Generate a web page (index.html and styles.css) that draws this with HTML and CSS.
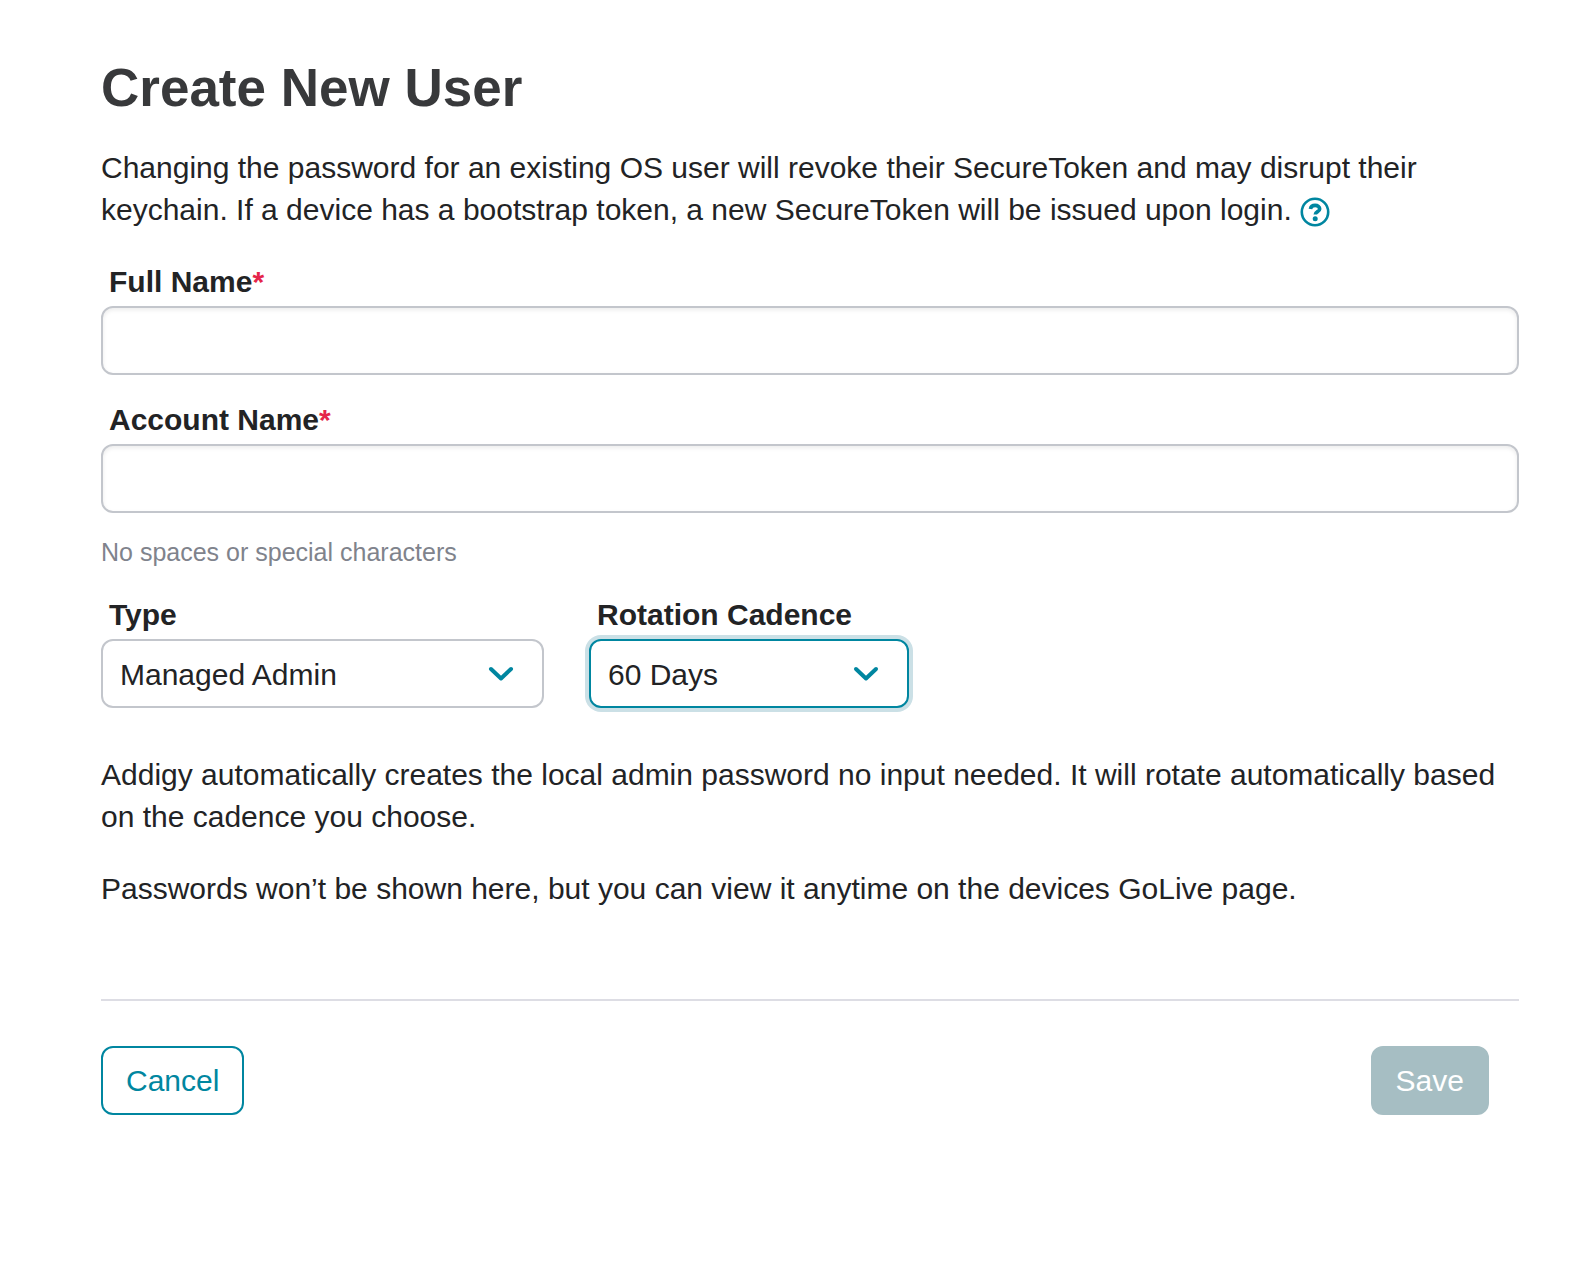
FILE: index.html
```
<!DOCTYPE html>
<html lang="en">
<head>
  <meta charset="UTF-8">
  <meta name="viewport" content="width=device-width, initial-scale=1">
  <title>Create New User</title>
  <link rel="stylesheet" href="styles.css">
</head>
<body>
  <form class="user-form">
    <h1>Create New User</h1>
    <p class="intro">
      Changing the password for an existing OS user will revoke their SecureToken and may disrupt their keychain. If a device has a bootstrap token, a new SecureToken will be issued upon login.
      <button type="button" class="help" aria-label="Help">
        <svg viewBox="0 0 30 30" fill="none" stroke="currentColor">
          <circle cx="15" cy="15" r="13.2" stroke-width="2.6"/>
          <path d="M10.4 12C10.9 9.5 12.6 8.4 15.1 8.4C17.8 8.4 19.7 9.8 19.7 12C19.7 14.7 15.3 14.6 15.3 17.6" stroke-width="3.6"/>
          <circle cx="15.2" cy="21.8" r="2.5" fill="currentColor" stroke="none"/>
        </svg>
      </button>
    </p>

    <div class="field">
      <label for="fullName">Full Name<span class="required">*</span></label>
      <input type="text" id="fullName" name="fullName" required>
    </div>

    <div class="field">
      <label for="accountName">Account Name<span class="required">*</span></label>
      <input type="text" id="accountName" name="accountName" aria-describedby="accountHint" required>
      <p class="hint" id="accountHint">No spaces or special characters</p>
    </div>

    <div class="row">
      <div class="field type">
        <label for="type">Type</label>
        <div class="select">
          <select id="type" name="type">
            <option>Managed Admin</option>
          </select>
          <svg class="chevron" viewBox="0 0 26 16"><path d="M3 3L13 12.5L23 3"/></svg>
        </div>
      </div>
      <div class="field cadence">
        <label for="cadence">Rotation Cadence</label>
        <div class="select">
          <select id="cadence" name="cadence" class="active">
            <option>60 Days</option>
          </select>
          <svg class="chevron" viewBox="0 0 26 16"><path d="M3 3L13 12.5L23 3"/></svg>
        </div>
      </div>
    </div>

    <div class="notes">
      <p>Addigy automatically creates the local admin password no input needed. It will rotate automatically based on the cadence you choose.</p>
      <p>Passwords won’t be shown here, but you can view it anytime on the devices GoLive page.</p>
    </div>

    <div class="actions">
      <button type="button" class="btn cancel">Cancel</button>
      <button type="submit" class="btn save" disabled>Save</button>
    </div>
  </form>
</body>
</html>
```
FILE: styles.css
```
* {
  box-sizing: border-box;
}
body {
  margin: 0;
  background: #fff;
  color: #222325;
  font-family: "Helvetica Neue", "Liberation Sans", Arial, sans-serif;
  font-size: 30px;
  line-height: 42px;
}
.user-form {
  padding: 57px 59px 60px 101px;
}
h1 {
  margin: 0 0 28px;
  color: #38393b;
  font-size: 53px;
  line-height: 62px;
}
p {
  margin: 0;
}
.intro {
  margin-bottom: 30px;
}
.help {
  display: inline-block;
  padding: 0;
  border: none;
  background: none;
  color: #0086a0;
  cursor: pointer;
  vertical-align: -7px;
}
.help svg {
  display: block;
  width: 30px;
  height: 30px;
}
.field {
  display: flex;
  flex-direction: column;
  gap: 3px;
  margin-bottom: 24px;
}
label {
  padding-left: 8px;
  font-weight: bold;
}
.required {
  color: #e5254b;
}
input, select {
  display: block;
  width: 100%;
  height: 69px;
  padding: 0 17px;
  border: 2px solid #c3c6cc;
  border-radius: 12px;
  background: #fff;
  color: inherit;
  font: inherit;
}
input {
  box-shadow: inset 0 2px 4px rgba(0, 0, 0, 0.08);
}
.hint {
  margin-top: 18px;
  color: #7f838c;
  font-size: 25px;
  line-height: 36px;
}
.row {
  display: flex;
  gap: 45px;
  margin-bottom: 22px;
}
.type {
  width: 443px;
}
.cadence {
  width: 320px;
}
.select {
  position: relative;
}
select {
  padding-top: 2px;
  appearance: none;
}
.active {
  border-color: #0086a0;
  box-shadow: 0 0 0 4px #cbe0e6;
  outline: none;
}
.chevron {
  position: absolute;
  top: 27px;
  right: 30px;
  width: 26px;
  height: 16px;
  fill: none;
  stroke: #0086a0;
  stroke-width: 4;
  stroke-linecap: round;
  stroke-linejoin: round;
  pointer-events: none;
}
.notes {
  display: flex;
  flex-direction: column;
  gap: 30px;
  margin-bottom: 89px;
}
.actions {
  display: flex;
  justify-content: space-between;
  padding: 45px 30px 0 0;
  border-top: 2px solid #dddde4;
}
.btn {
  height: 69px;
  padding: 0 23px;
  border: 2px solid #0086a0;
  border-radius: 12px;
  background: #fff;
  color: #0086a0;
  font: inherit;
  cursor: pointer;
}
.save {
  border-color: #a6bec3;
  background: #a6bec3;
  color: #fff;
  cursor: default;
}
```
